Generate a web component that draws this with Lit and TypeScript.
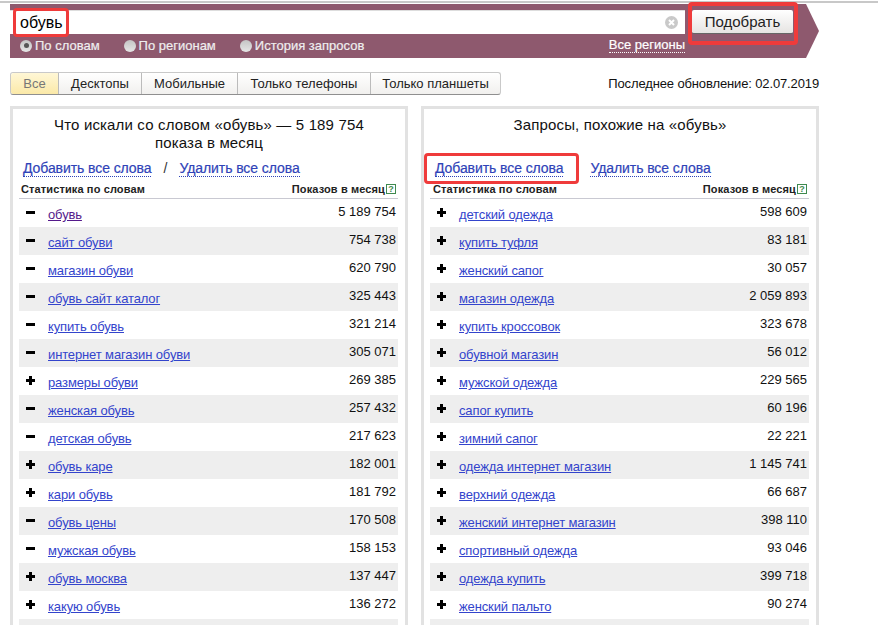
import { LitElement, css, html, svg } from "lit";
import { customElement } from "lit/decorators.js";

type Row = [string, string, string?];

const leftRows: Row[] = [
  ["-", "обувь", "5 189 754"],
  ["-", "сайт обуви", "754 738"],
  ["-", "магазин обуви", "620 790"],
  ["-", "обувь сайт каталог", "325 443"],
  ["-", "купить обувь", "321 214"],
  ["-", "интернет магазин обуви", "305 071"],
  ["+", "размеры обуви", "269 385"],
  ["-", "женская обувь", "257 432"],
  ["-", "детская обувь", "217 623"],
  ["+", "обувь каре", "182 001"],
  ["+", "кари обувь", "181 792"],
  ["-", "обувь цены", "170 508"],
  ["-", "мужская обувь", "158 153"],
  ["+", "обувь москва", "137 447"],
  ["+", "какую обувь", "136 272"],
];

const rightRows: Row[] = [
  ["+", "детский одежда", "598 609"],
  ["+", "купить туфля", "83 181"],
  ["+", "женский сапог", "30 057"],
  ["+", "магазин одежда", "2 059 893"],
  ["+", "купить кроссовок", "323 678"],
  ["+", "обувной магазин", "56 012"],
  ["+", "мужской одежда", "229 565"],
  ["+", "сапог купить", "60 196"],
  ["+", "зимний сапог", "22 221"],
  ["+", "одежда интернет магазин", "1 145 741"],
  ["+", "верхний одежда", "66 687"],
  ["+", "женский интернет магазин", "398 110"],
  ["+", "спортивный одежда", "93 046"],
  ["+", "одежда купить", "399 718"],
  ["+", "женский пальто", "90 274"],
];

const tabs = ["Все", "Десктопы", "Мобильные", "Только телефоны", "Только планшеты"];
const modes = ["По словам", "По регионам", "История запросов"];

@customElement("app-root")
export class AppRoot extends LitElement {
  static styles = css`
    :host {
      display: block;
      position: relative;
      width: 878px;
      height: 625px;
      overflow: hidden;
      background: #fff;
      font-family: "Liberation Sans", Arial, sans-serif;
      font-size: 13px;
      color: #111;
    }
    .topline {
      height: 2px;
      margin-top: 1px;
      background: #c8c8c8;
    }
    .bar {
      margin: 1px 0 0 10px;
      width: 809px;
      height: 54px;
      box-sizing: border-box;
      padding: 6px 26px 0 0;
      background: #8e596e;
      clip-path: polygon(0 0, 796px 0, 100% 50%, 796px 100%, 0 100%);
    }
    .search {
      display: flex;
      gap: 7px;
      height: 24px;
    }
    .input {
      flex: 1;
      display: flex;
      align-items: center;
      justify-content: space-between;
      background: #fff;
      padding: 0 7px 0 10px;
      font-size: 16px;
      color: #000;
      border-top: 1px solid #ddd;
      box-sizing: border-box;
    }
    .clear {
      width: 13px;
      height: 13px;
      display: block;
    }
    .btn {
      width: 101px;
      display: flex;
      align-items: center;
      justify-content: center;
      box-sizing: border-box;
      border-radius: 2px;
      border-bottom: 1px solid #666;
      background: linear-gradient(#fff, #e6e4e2);
      font-size: 15px;
      color: #222;
    }
    .options {
      display: flex;
      align-items: center;
      margin-top: 3px;
      height: 17px;
      width: 675px;
      color: #eee;
    }
    .mode {
      display: flex;
      align-items: center;
      gap: 3px;
      padding-left: 10px;
      -webkit-text-stroke: 0.2px #eee;
    }
    .mode + .mode {
      margin-left: 14px;
    }
    .radio {
      width: 12px;
      height: 12px;
      border-radius: 50%;
      background: linear-gradient(#c4c4c4, #e6e6e6);
      box-sizing: border-box;
      display: flex;
      align-items: center;
      justify-content: center;
    }
    .radio.on::after {
      content: "";
      width: 5px;
      height: 5px;
      border-radius: 50%;
      background: #555;
    }
    .regions {
      margin-left: auto;
      color: #fff;
      border-bottom: 1px dotted #fff;
      line-height: 14px;
      -webkit-text-stroke: 0.2px #fff;
    }
    .toolbar {
      display: flex;
      align-items: center;
      justify-content: space-between;
      margin: 14px 59px 0 10px;
      height: 22px;
    }
    .updated {
      letter-spacing: -0.13px;
    }
    .tabs {
      display: flex;
      height: 21px;
      border: 1px solid #c9c9c9;
      border-bottom-color: #8f8f8f;
      border-radius: 3px;
      background: linear-gradient(#fff, #f1f0ee);
    }
    .tab {
      display: flex;
      align-items: center;
      justify-content: center;
      box-sizing: border-box;
      border-left: 1px solid #bbb;
      color: #222;
    }
    .tab:first-child {
      border-left: 0;
      color: #777;
      background: linear-gradient(#fff7d6, #fbe9a8);
      border-radius: 3px 0 0 3px;
    }
    .panels {
      display: flex;
      gap: 13px;
      margin: 12px 0 0 10px;
    }
    .panel {
      width: 398px;
      height: 560px;
      box-sizing: border-box;
      border: 3px solid #e2e2e2;
      padding: 7px 7px 0 6px;
    }
    .title {
      height: 38px;
      width: 380px;
      margin: 0 auto;
      font-size: 15px;
      line-height: 18px;
      letter-spacing: 0.15px;
      text-align: center;
      color: #111;
    }
    .links {
      display: flex;
      align-items: center;
      height: 18px;
      margin-top: 5px;
      padding-left: 4px;
      font-size: 14px;
      letter-spacing: -0.08px;
      color: #333;
    }
    .similar .links {
      padding-left: 5px;
    }
    .bulk {
      color: #2f43b8;
      line-height: 16px;
      border-bottom: 1px dotted #2f43b8;
      -webkit-text-stroke: 0.2px #2f43b8;
    }
    .slash {
      width: 28px;
      text-align: center;
    }
    .gap {
      width: 27px;
    }
    .head {
      display: flex;
      justify-content: space-between;
      align-items: center;
      height: 18px;
      margin-top: 2px;
      padding: 1px 2px 0;
      border-bottom: 1px solid #c9c9d2;
      font-size: 11px;
      font-weight: bold;
      letter-spacing: 0.12px;
      color: #222;
    }
    .similar .head {
      padding-left: 3px;
    }
    .shows {
      display: flex;
      align-items: center;
      gap: 1px;
    }
    .hint {
      width: 10px;
      height: 10px;
      box-sizing: border-box;
      border: 1px solid #3f8a4f;
      color: #3f8a4f;
      font-size: 9px;
      line-height: 8px;
      letter-spacing: 0;
      text-align: center;
    }
    .row {
      display: flex;
      height: 28px;
      box-sizing: border-box;
      padding: 0 2px 0 7px;
      justify-content: space-between;
    }
    .row:nth-child(even) {
      background: #eeeeee;
    }
    .word {
      display: flex;
      align-items: center;
      gap: 13px;
      height: 28px;
    }
    .sign {
      width: 9px;
      height: 9px;
      display: block;
      margin-top: -1px;
    }
    .word a {
      color: #3344cc;
      text-decoration: underline;
      letter-spacing: -0.13px;
      margin-top: 3px;
    }
    .word a.seen {
      color: #551a8b;
    }
    .count {
      padding-top: 5px;
      line-height: 15px;
      color: #111;
    }
    .mark {
      position: absolute;
      box-sizing: border-box;
      border: 3px solid #ef3b3b;
      border-radius: 4px;
      pointer-events: none;
    }
    .mark.word-mark {
      left: 13px;
      top: 8px;
      width: 56px;
      height: 29px;
    }
    .mark.btn-mark {
      left: 688px;
      top: 2px;
      width: 110px;
      height: 43px;
      border-width: 4px;
    }
    .mark.add-mark {
      left: 424px;
      top: 153px;
      width: 155px;
      height: 31px;
    }
  `;

  private sign(kind: string) {
    return html`<svg class="sign" viewBox="0 0 9 9">
      <rect x="0" y="3" width="9" height="3" fill="#000"></rect>
      ${kind === "+" ? svg`<rect x="3" y="0" width="3" height="9" fill="#000"></rect>` : ""}
    </svg>`;
  }

  private panel(title: unknown, slash: boolean, rows: Row[]) {
    return html`
      <section class="panel ${slash ? "" : "similar"}">
        <div class="title">${title}</div>
        <div class="links">
          <span class="bulk">Добавить все слова</span>
          ${slash ? html`<span class="slash">/</span>` : html`<span class="gap"></span>`}
          <span class="bulk">Удалить все слова</span>
        </div>
        <div class="head">
          <span>Статистика по словам</span>
          <span class="shows">Показов в месяц<span class="hint">?</span></span>
        </div>
        <div class="rows">
          ${rows.map(
            ([kind, word, count], i) => html`
              <div class="row">
                <span class="word">
                  ${this.sign(kind)}
                  <a class="${slash && i === 0 ? "seen" : ""}">${word}</a>
                </span>
                <span class="count">${count}</span>
              </div>
            `
          )}
          <div class="row"></div>
        </div>
      </section>
    `;
  }

  render() {
    const tabWidths = [47, 83, 96, 133, 130];
    return html`
      <div class="topline"></div>
      <div class="bar">
        <div class="search">
          <div class="input">
            <span>обувь</span>
            <svg class="clear" viewBox="0 0 13 13">
              <circle cx="6.5" cy="6.5" r="6.5" fill="#c9c9c9"></circle>
              <path d="M4 4l5 5M9 4l-5 5" stroke="#fff" stroke-width="2"></path>
            </svg>
          </div>
          <div class="btn">Подобрать</div>
        </div>
        <div class="options">
          ${modes.map(
            (m, i) => html`<span class="mode"><span class="radio ${i === 0 ? "on" : ""}"></span>${m}</span>`
          )}
          <span class="regions">Все регионы</span>
        </div>
      </div>
      <div class="toolbar">
        <div class="tabs">
          ${tabs.map(
            (t, i) => html`<span class="tab" style="width:${tabWidths[i]}px">${t}</span>`
          )}
        </div>
        <span class="updated">Последнее обновление: 02.07.2019</span>
      </div>
      <div class="panels">
        ${this.panel(
          html`Что искали со словом «обувь» — 5 189 754<br />показа в месяц`,
          true,
          leftRows
        )}
        ${this.panel(html`Запросы, похожие на «обувь»`, false, rightRows)}
      </div>
      <div class="mark word-mark"></div>
      <div class="mark btn-mark"></div>
      <div class="mark add-mark"></div>
    `;
  }
}
